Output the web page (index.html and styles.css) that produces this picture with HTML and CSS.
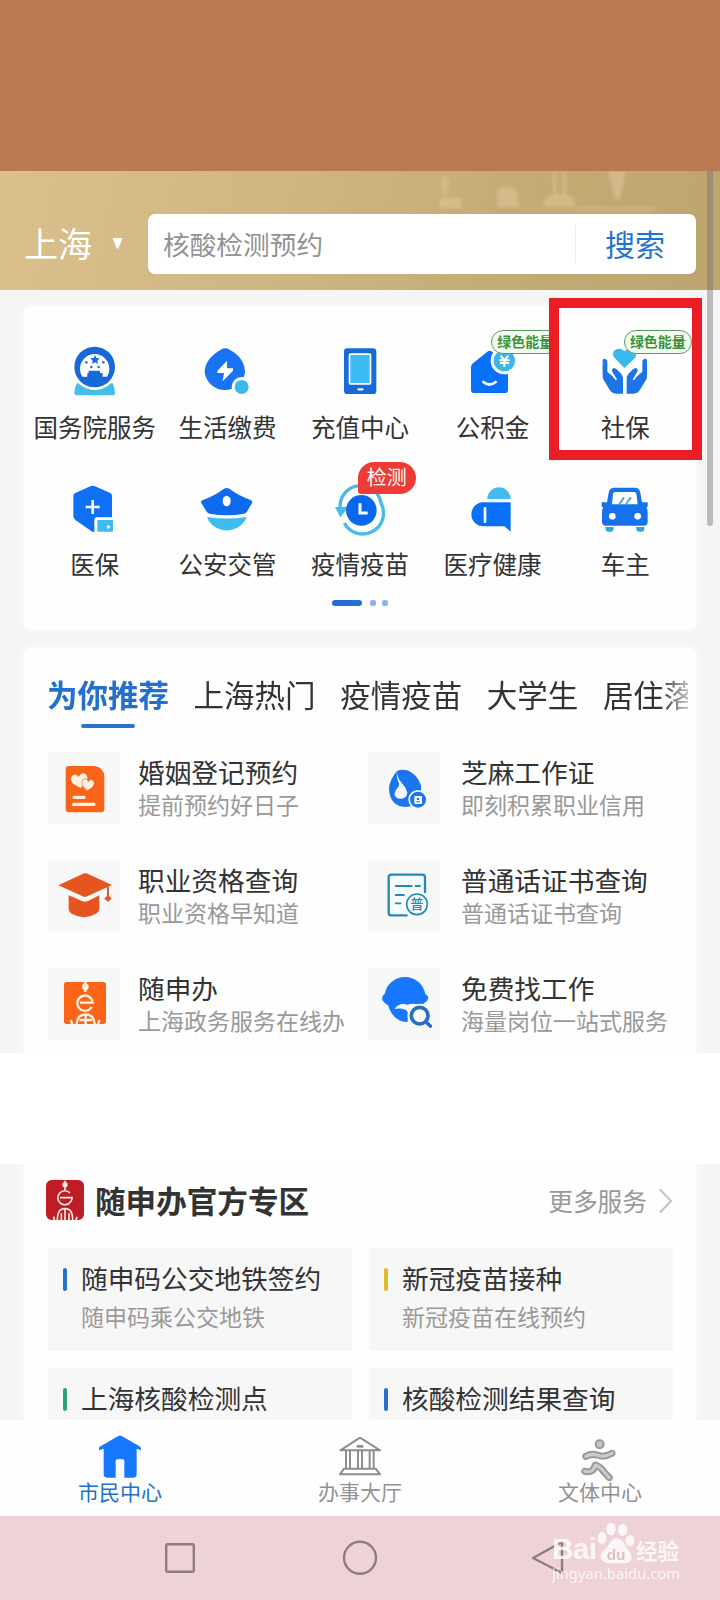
FILE: index.html
```html
<!DOCTYPE html>
<html lang="zh-CN">
<head>
<meta charset="utf-8">
<title>市民中心</title>
<link rel="stylesheet" href="styles.css">
</head>
<body>
<div class="screen">
  <div class="status"></div>
  <header class="header">
    <svg class="skyline" viewBox="0 0 300 119" width="300" height="119">
      <defs><filter id="soft"><feGaussianBlur stdDeviation="1.8"/></filter></defs>
      <g filter="url(#soft)" fill="#dcc697" opacity=".6">
        <path d="M23 4q-4 10 1 16-1 6 4 7l-2-8q6-6 1-12z"/><path d="M19 27h22v10H19z"/>
        <path d="M77 20q8-8 20 0l2 16H78z"/><path d="M133 0h3v24h-3zM143 0h3v24h-3z"/><path d="M124 28q16-10 30 0l1 8h-31z"/>
        <path d="M188 0h18l-6 28h-5z"/><path d="M155 35h80v6h-80z" opacity=".5"/>
      </g>
    </svg>
    <div class="city">上海</div>
    <svg class="caret" viewBox="0 0 11 11" width="11" height="11"><path d="M.5 0h10L6.500 10.500h-2z" fill="#fff"/></svg>
    <div class="search"><span class="query">核酸检测预约</span><span class="go">搜索</span></div>
  </header>

  <main class="upper">
    <section class="card services">
      <div class="grid">
        <div class="cell">
          <svg class="ico" viewBox="195 153 180 180"><path d="M230 280H338Q345 296 345 308Q345 316 336 316H232Q223 316 223 308Q223 296 230 280Z" fill="#45bdea"/><circle cx="284" cy="231" r="69" fill="#fff"/><circle cx="284" cy="231" r="61" fill="#1769d8"/><path d="M247 260A44 44 0 1 1 321 260H308V249H300V242H266V249H262V260Z" fill="#fff"/><path d="M285 195l4 9 10 1-7 7 2 10-9-5-9 5 2-10-7-7 10-1z" fill="#1769d8"/><g fill="#287ad9"><circle cx="259" cy="217" r="4"/><circle cx="310" cy="217" r="4"/><circle cx="274" cy="231" r="4"/><circle cx="296" cy="231" r="4"/></g></svg>
          <span class="label">国务院服务</span>
        </div>
        <div class="cell">
          <svg class="ico" viewBox="592 153 180 180"><path d="M663 179Q677 171 690 179Q735 203 736 247A61 61 0 0 1 615 247Q615 207 663 179Z" fill="#1874f5"/><path d="M682 212L653 243V249H673L669 274L700 242V235H682Z" fill="#fff"/><circle cx="726" cy="291" r="30" fill="#fff"/><circle cx="726" cy="291" r="21" fill="#3db8ee"/></svg>
          <span class="label">生活缴费</span>
        </div>
        <div class="cell">
          <svg class="ico" viewBox="990 153 180 180"><rect x="1032" y="175" width="97" height="137" rx="10" fill="#176bd9"/><rect x="1046" y="190" width="68" height="94" rx="5" fill="#fff"/><rect x="1051" y="195" width="58" height="84" fill="#3dbcf3"/><path d="M1076 298h11" stroke="#fff" stroke-width="7" stroke-linecap="round"/></svg>
          <span class="label">充值中心</span>
        </div>
        <div class="cell">
          <svg class="ico" viewBox="309 153 180 180"><path d="M333 232Q333 225 339 220L382 185Q389 180 396 185L444 224V299Q444 309 434 309H343Q333 309 333 299Z" fill="#0871f9"/><path d="M370 276Q388 291 407 276" fill="none" stroke="#fff" stroke-width="8" stroke-linecap="round"/><circle cx="433" cy="212" r="41" fill="#fff"/><circle cx="433" cy="212" r="32" fill="#3eb6e8"/><path d="M422 197l11 14 12-14M418 211h31M420 219h27M433 210v21" fill="none" stroke="#fff" stroke-width="6"/></svg>
          <span class="label">公积金</span><span class="tag">绿色能量</span>
        </div>
        <div class="cell">
          <svg class="ico" viewBox="706 153 180 180"><path d="M794 234L763 202C751 181 778 167 794 184C810 167 838 179 827 203Z" fill="#37baf0"/><path d="M732 206Q742 206 743 214V245L758 258L768 271Q774 270 770 265L758 245Q754 236 764 234Q769 234 785 252Q791 259 790 270V311H768Q757 311 749 298L730 266Q728 260 729 210Z" fill="#1c75e8"/><path transform="translate(1591 0) scale(-1 1)" d="M732 206Q742 206 743 214V245L758 258L768 271Q774 270 770 265L758 245Q754 236 764 234Q769 234 785 252Q791 259 790 270V311H768Q757 311 749 298L730 266Q728 260 729 210Z" fill="#1c75e8"/></svg>
          <span class="label">社保</span><span class="tag">绿色能量</span>
        </div>
        <div class="cell">
          <svg class="ico" viewBox="195 55 180 180"><path d="M271 77Q278 74 285 77L331 97Q336 100 336 106V213H277L227 179Q220 174 220 167V106Q220 100 226 97Z" fill="#0f6ff7"/><path d="M257 139h42M278 118v42" stroke="#fff" stroke-width="8"/><path d="M283 213V178Q283 170 291 170H344V216H283Z" fill="#fff"/><rect x="292" y="178" width="47" height="35" rx="3" fill="#3cbcee"/><circle cx="325" cy="199" r="5" fill="#fff"/></svg>
          <span class="label">医保</span>
        </div>
        <div class="cell">
          <svg class="ico" viewBox="592 55 180 180"><path d="M673 84Q681 80 689 84Q711 101 754 119Q760 122 757 127L742 153Q739 158 733 159Q681 169 630 159Q624 158 621 153L605 127Q602 122 608 119Q650 102 673 84Z" fill="#0e6bf0"/><ellipse cx="681" cy="121" rx="12" ry="16" fill="#fff"/><path d="M623 169Q681 178 740 169Q739 181 722 195Q681 223 642 196Q624 182 623 169Z" fill="#3cbcf0"/></svg>
          <span class="label">公安交管</span>
        </div>
        <div class="cell">
          <svg class="ico" viewBox="990 55 180 180"><path d="M1021 145A61 61 0 0 1 1143 128A62 62 0 0 1 1033 187" fill="none" stroke="#49b9e8" stroke-width="10"/><path d="M1005 139H1046L1021 170Z" fill="#49b9e8"/><circle cx="1084" cy="149" r="46" fill="#0967ee"/><path d="M1080 128V157H1103" fill="none" stroke="#fff" stroke-width="9"/></svg>
          <span class="label">疫情疫苗</span><span class="alert">检测</span>
        </div>
        <div class="cell">
          <svg class="ico" viewBox="309 55 180 180"><path d="M382 115A35 35 0 0 1 452 115Z" fill="#42bdea"/><path d="M370 125H452V213L433 197H370A36 36 0 0 1 370 125Z" fill="#0971f7"/><path d="M375 143V183" stroke="#fff" stroke-width="8" stroke-linecap="round"/></svg>
          <span class="label">医疗健康</span>
        </div>
        <div class="cell">
          <svg class="ico" viewBox="706 55 180 180"><path d="M737 199h25v7q0 7-7 7h-10q-7 0-7-7zM829 199h25v7q0 7-7 7h-10q-7 0-7-7z" fill="#34a9d3"/><path d="M747 96Q750 81 764 81H826Q839 81 842 96L847 125H864V139H860Q864 146 864 155V184Q864 195 852 195H739Q727 195 727 184V155Q727 146 731 139H726V125H742Z" fill="#1672ea"/><path d="M765 94H824Q829 94 830 99L834 131H757L760 99Q761 94 765 94Z" fill="#fff"/><circle cx="758" cy="167" r="10" fill="#fff"/><circle cx="834" cy="167" r="10" fill="#fff"/><path d="M793 110L779 130M814 110L799 130" stroke="#5aa5c8" stroke-width="6"/></svg>
          <span class="label">车主</span>
        </div>
      </div>
      <div class="pager"><i class="on"></i><i></i><i></i></div>
    </section>

    <section class="card picks">
      <nav class="tabs"><span class="tab active">为你推荐</span><span class="tab">上海热门</span><span class="tab">疫情疫苗</span><span class="tab">大学生</span><span class="tab">居住落</span></nav>
      <div class="list">
        <div class="item">
          <svg class="tile" viewBox="144 276 216 216"><path d="M206 318H283Q313 323 313 350V447Q313 457 303 457H206Q197 457 197 447V328Q197 318 206 318Z" fill="#fa6419"/><path d="M242 384Q206 369 214 351Q225 337 236 350Q249 331 261 347Q268 361 242 384Z" fill="#fff4e5"/><path d="M261 392Q240 374 248 360Q257 350 265 364Q276 352 283 368Q283 382 261 392Z" fill="#fff4e5" stroke="#fa6419" stroke-width="2"/><path d="M222 412h30M221 433h61" stroke="#fff0df" stroke-width="10" stroke-linecap="round"/></svg>
          <div class="txt"><b>婚姻登记预约</b><span>提前预约好日子</span></div>
        </div>
        <div class="item">
          <svg class="tile" viewBox="24 276 216 216"><path d="M111 333Q124 326 142 331Q170 341 183 376Q188 441 136 441Q88 438 87 384Q90 357 111 333Z" fill="#1b75ec"/><path d="M111 333Q110 353 126 370Q139 384 142 398A20 20 0 0 1 104 405Q103 394 110 387Q119 378 117 370Q108 352 111 333Z" fill="#f5faff"/><circle cx="174" cy="419" r="29" fill="#f7f8fa"/><circle cx="174" cy="419" r="24" fill="#1b75ec"/><rect x="163" y="408" width="23" height="24" rx="3" fill="#fff"/><circle cx="174" cy="417" r="4" fill="#1b75ec"/><path d="M167 427q7-8 14 0z" fill="#1b75ec"/></svg>
          <div class="txt"><b>芝麻工作证</b><span>即刻积累职业信用</span></div>
        </div>
        <div class="item">
          <svg class="tile" viewBox="144 600 216 216"><path d="M175 676L246 643Q256 637 266 643L336 675L262 709Q255 712 248 709Z" fill="#e65520"/><path d="M206 706L246 723Q255 726 264 723L298 706V745Q298 756 288 761Q253 782 215 761Q206 756 206 745Z" fill="#e65520"/><path d="M324 680V713" stroke="#e65520" stroke-width="6"/><path d="M324 704l11 12-11 9-11-9z" fill="#e65520"/></svg>
          <div class="txt"><b>职业资格查询</b><span>职业资格早知道</span></div>
        </div>
        <div class="item">
          <svg class="tile" viewBox="24 600 216 216"><path d="M195 696V652Q195 644 187 644H94Q86 644 86 652V758Q86 766 94 766H140" fill="#f5fdff" stroke="#2687bd" stroke-width="7" stroke-linecap="round"/><path d="M107 678h48M167 678h13M107 705h25M107 730h15" stroke="#2687bd" stroke-width="5.500" stroke-linecap="round"/><circle cx="171" cy="733" r="31" fill="#f5fdff" stroke="#2687bd" stroke-width="5"/><text x="171" y="747" text-anchor="middle" class="seal">普</text></svg>
          <div class="txt"><b>普通话证书查询</b><span>普通话证书查询</span></div>
        </div>
        <div class="item">
          <svg class="tile" viewBox="144 924 216 216"><rect x="192" y="966" width="126" height="126" rx="8" fill="#fc6417"/><g fill="none" stroke="#fff2e2" stroke-width="7"><path d="M256 966V996M275 1041A23 23 0 1 1 278 1028H240"/><path d="M230 1092Q232 1063 257 1063Q282 1063 284 1092M257 1063V1092M238 1080H276M212 1080L217 1092M299 1080L294 1092"/></g><circle cx="256" cy="980" r="10" fill="#fff2e2"/></svg>
          <div class="txt"><b>随申办</b><span>上海政务服务在线办</span></div>
        </div>
        <div class="item">
          <svg class="tile" viewBox="24 924 216 216"><path d="M74 1002A62 62 0 0 1 196 1002Q205 1006 205 1014Q203 1024 191 1030Q180 1080 139 1086Q99 1083 84 1036Q68 1026 66 1016Q66 1006 74 1002Z" fill="#1877ff"/><path d="M103 1047Q118 1026 143 1034Q157 1029 174 1034L153 1091H143V1057Q136 1042 103 1047Z" fill="#f7f8fa"/><circle cx="180" cy="1068" r="37" fill="#f7f8fa"/><circle cx="179" cy="1067" r="25" fill="#fff" stroke="#286fc1" stroke-width="11"/><path d="M198 1086L211 1098" stroke="#286fc1" stroke-width="11" stroke-linecap="round"/></svg>
          <div class="txt"><b>免费找工作</b><span>海量岗位一站式服务</span></div>
        </div>
      </div>
    </section>
    <div class="scrollbar"></div>
    <div class="highlight"></div>
  </main>

  <div class="gap"></div>

  <section class="lower">
    <div class="zone">
      <div class="zone-head">
        <svg class="logo" viewBox="138 90 114 120" width="38" height="40"><rect x="138" y="90" width="114" height="120" rx="17" fill="#bf1d25"/><g fill="none" stroke="#ffe9e2" stroke-width="5"><path d="M195 92V120M212 155A21 21 0 1 1 210 129M180 143H216Q216 150 212 155"/><path d="M172 210Q171 176 195 176Q219 176 218 210M195 177V210M184 210V190M207 210V190M161 200L163 210M231 200L228 210"/></g><circle cx="195" cy="104" r="8" fill="#ffe9e2"/></svg>
        <h2>随申办官方专区</h2>
        <span class="more">更多服务</span>
        <svg class="chev" viewBox="0 0 14 26" width="14" height="26"><path d="M1 1.500L12 13L1 24.500" fill="none" stroke="#c2c2c2" stroke-width="2"/></svg>
      </div>
      <div class="boxes">
        <div class="box blue"><b>随申码公交地铁签约</b><span>随申码乘公交地铁</span></div>
        <div class="box gold"><b>新冠疫苗接种</b><span>新冠疫苗在线预约</span></div>
        <div class="box green"><b>上海核酸检测点</b></div>
        <div class="box blue"><b>核酸检测结果查询</b></div>
      </div>
    </div>
  </section>

  <nav class="tabbar">
    <div class="dest on">
      <svg viewBox="285 94 150 150" width="50" height="50"><path d="M355 109Q360 106 365 109L421 141Q424 144 423 152L410 147V224Q410 234 400 234H373V184Q373 179 368 179H352Q347 179 347 184V234H321Q311 234 311 224V147L297 152Q296 144 299 141Z" fill="#1877ff"/></svg>
      <span>市民中心</span>
    </div>
    <div class="dest">
      <svg viewBox="1005 94 150 150" width="50" height="50"><g fill="none" stroke="#8e8e8e" stroke-width="6"><path d="M1021 152L1080 114L1140 152ZM1038 155V207M1050 155V207M1074 155V207M1086 155V207M1109 155V207M1121 155V207M1032 207H1127L1140 224H1020Z" stroke-linejoin="round"/><path d="M1070 140H1090" stroke-width="8"/></g></svg>
      <span>办事大厅</span>
    </div>
    <div class="dest">
      <svg viewBox="645 94 150 150" width="50" height="50"><g fill="none" stroke-linecap="round" stroke-linejoin="round"><path d="M677 170Q695 160 714 167Q734 174 756 161M674 215Q699 222 706 196Q724 203 733 218L748 234" stroke="#9a9a9a" stroke-width="21"/><path d="M677 170Q695 160 714 167Q734 174 756 161M674 215Q699 222 706 196Q724 203 733 218L748 234" stroke="#cbcbcb" stroke-width="9"/></g><circle cx="719" cy="134" r="12" fill="#c4c4c4" stroke="#999" stroke-width="6"/></svg>
      <span>文体中心</span>
    </div>
  </nav>

  <footer class="sysnav">
    <svg viewBox="0 0 720 84" width="720" height="84"><g fill="none" stroke="#8e7d80" stroke-width="2.400"><rect x="166.200" y="28.200" width="27.600" height="27.600" rx="1.500"/><circle cx="360" cy="41.800" r="16"/><path d="M533 42L562 26V57Z" stroke-linejoin="round"/></g></svg>
    <div class="mark">
      <div class="mark-top"><span class="bai">Bai</span>
        <svg viewBox="708 366 114 126" width="38" height="42"><g fill="#fff"><ellipse cx="750" cy="387" rx="14" ry="19"/><ellipse cx="785" cy="390" rx="14" ry="18"/><ellipse cx="723" cy="414" rx="13" ry="18"/><ellipse cx="807" cy="422" rx="13" ry="17"/><path d="M749 424Q768 406 785 424Q794 442 808 458Q820 488 790 490H742Q710 486 723 456Q741 443 749 424Z"/></g><text x="765" y="481" text-anchor="middle" class="du">du</text></svg>
        <span class="jy">经验</span></div>
      <div class="url">jingyan.baidu.com</div>
    </div>
  </footer>
</div>
</body>
</html>
```
FILE: styles.css
```css
* { box-sizing: border-box; }
body { margin: 0; font-family: "Noto Sans CJK SC", sans-serif; color: #333; background: #fff; }
.screen { width: 720px; height: 1600px; display: flex; flex-direction: column; overflow: hidden; }
.status { height: 171px; background: #ba7a54; flex: none; }

.header { position: relative; height: 119px; flex: none; display: flex; align-items: flex-start; padding: 43px 24px 0; background: linear-gradient(100deg, #dac08d 0%, #cfb580 40%, #c3aa73 75%, #bda570 100%); }
.skyline { position: absolute; right: 0; top: 0; width: 300px; }
.city { width: 88px; font-size: 34px; line-height: 58px; color: #fff; }
.caret { margin-top: 24px; }
.search { position: relative; margin-left: 25px; width: 548px; height: 60px; background: #fff; border-radius: 7px; display: flex; align-items: center; justify-content: space-between; padding-left: 15px; }
.query { font-size: 26.700px; line-height: 60px; color: #929292; }
.go { width: 121px; height: 38px; border-left: 1px solid #ececec; padding-left: 29px; font-size: 30px; line-height: 37px; color: #1f74cf; }

.upper { position: relative; height: 763px; flex: none; padding: 16px 24px 0; background: #f5f5f5; display: flex; flex-direction: column; gap: 18px; }
.card { width: 672px; background: #fefefe; box-shadow: 0 0 5px 2px #fafafa; }
.services { height: 324px; padding: 35px 4.500px 0; border-radius: 8px; }
.grid { display: grid; grid-template-columns: repeat(5, 132.600px); row-gap: 35.500px; }
.cell { position: relative; height: 102px; display: flex; flex-direction: column; align-items: center; gap: 10.500px; }
.ico { width: 60px; height: 60px; flex: none; }
.label { font-size: 24.500px; line-height: 30px; white-space: nowrap; }
.tag { position: absolute; left: 65px; top: -11px; width: 68px; height: 24px; border: 1px solid #5d9a5c; border-radius: 12px; background: #f4fdf2; color: #3a913a; font-size: 14px; font-weight: 700; line-height: 20px; text-align: center; white-space: nowrap; }
.alert { position: absolute; left: 64px; top: -16.500px; width: 58px; height: 32px; border-radius: 16px 16px 16px 3px; background: #ee3b35; color: #fff; font-size: 20px; line-height: 30px; text-align: center; }
.pager { margin: 19px 0 0 303.500px; display: flex; gap: 6px; }
.pager i { width: 6px; height: 6px; border-radius: 2px; background: #8fb2ea; }
.pager .on { width: 30px; background: #216fd2; border-radius: 3px; margin-right: 2px; }

.picks { height: 405px; padding: 24px 0 0 24px; border-radius: 8px 8px 0 0; }
.tabs { width: 641px; height: 56px; margin-left: -1px; overflow: hidden; display: flex; gap: 24.600px; -webkit-mask-image: linear-gradient(90deg, #000 612px, rgba(0,0,0,.3) 641px); mask-image: linear-gradient(90deg, #000 612px, rgba(0,0,0,.3) 641px); }
.tab { flex: none; font-size: 30.500px; line-height: 44px; }
.active { color: #2170cf; font-weight: 700; display: flex; flex-direction: column; align-items: center; gap: 8px; }
.active::after { content: ""; width: 54px; height: 4px; border-radius: 2px; background: #2a72cc; }
.list { margin-top: 24px; display: grid; grid-template-columns: 320px 320px; grid-auto-rows: 108px; column-gap: 0; }
.item { display: flex; align-items: flex-start; gap: 18px; }
.tile { width: 72px; height: 72px; flex: none; background: #f8f8f8; border-radius: 3px; box-shadow: 0 0 3px 1px #fafafa; }
.item:nth-child(even) .tile { margin-right: 3px; }
.txt { padding-top: 3px; display: flex; flex-direction: column; white-space: nowrap; }
.txt b { font-weight: 400; font-size: 26.700px; line-height: 33px; }
.txt span { font-size: 23px; line-height: 33px; color: #999; }
.seal { font-size: 40px; font-weight: 500; fill: #2687bd; }
.scrollbar { position: absolute; left: 707px; top: -119px; width: 6px; height: 355px; background: rgba(120,115,120,.45); border-radius: 0 0 3px 3px; }
.highlight { position: absolute; left: 549px; top: 8px; width: 153px; height: 162px; border: 10px solid #eb1c24; }

.gap { height: 111px; flex: none; background: #fff; }

.lower { height: 256px; flex: none; padding: 0 24px; background: #f5f5f5; overflow: hidden; }
.zone { width: 672px; height: 256px; background: #fefefe; box-shadow: 0 0 5px 2px #fafafa; padding: 16px 0 0 22px; overflow: hidden; }
.zone-head { height: 40px; width: 627px; display: flex; align-items: center; }
.zone-head h2 { margin: 0 auto 0 11px; font-size: 30.600px; line-height: 40px; }
.more { font-size: 24.700px; line-height: 40px; color: #999; }
.chev { margin: 2px 0 0 12px; }
.boxes { margin: 28px 0 0 2px; display: grid; grid-template-columns: 304px 304px; column-gap: 17px; row-gap: 17px; grid-auto-rows: 103px; }
.box { position: relative; background: #f7f7f7; padding: 13px 0 0 33px; display: flex; flex-direction: column; white-space: nowrap; }
.box::before { content: ""; position: absolute; left: 15px; top: 20px; width: 4px; height: 23px; border-radius: 2px; background: #2a6fd0; }
.gold::before { background: #e5b92f; }
.green::before { background: #2ba578; }
.box b { font-weight: 400; font-size: 26.700px; line-height: 33px; }
.box span { margin-top: 5px; font-size: 23px; line-height: 34px; color: #999; }

.tabbar { height: 96px; flex: none; background: #fefefe; display: grid; grid-template-columns: repeat(3, 240px); padding-top: 11px; }
.dest { display: flex; flex-direction: column; align-items: center; color: #929292; font-size: 21px; line-height: 20px; }
.dest.on { color: #2170c8; }
.sysnav { position: relative; height: 84px; flex: none; background: #eed2d7; }
.mark { position: absolute; left: 552px; top: 6px; width: 130px; color: #fff; opacity: .8; }
.mark-top { display: flex; align-items: flex-end; height: 42px; }
.bai { width: 46px; font: 700 30px/36px "Liberation Sans", sans-serif; letter-spacing: -.8px; padding-bottom: 0; transform: translateY(3px); }
.mark svg { flex: none; margin-left: -1px; }
.du { font: 700 46px "Liberation Sans", sans-serif; fill: #dfb9c0; }
.jy { font-size: 21.500px; font-weight: 700; line-height: 26px; margin: 0 0 -1px 1px; transform: translateY(-2px); }
.url { font: 14.800px/20px "Noto Sans", sans-serif; white-space: nowrap; transform: translateY(-1px); }
```
